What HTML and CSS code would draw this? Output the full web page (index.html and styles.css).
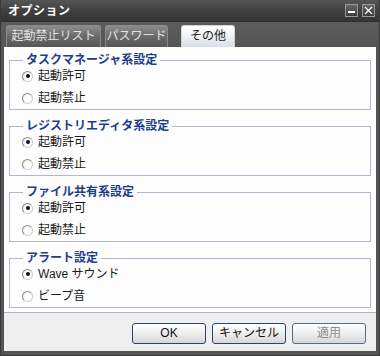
FILE: index.html
```html
<!DOCTYPE html>
<html lang="ja">
<head>
    <meta charset="UTF-8">
    <title>オプション</title>
    <link rel="stylesheet" href="styles.css">
</head>
<body>
<div class="window">
    <div class="titlebar">
        <span class="title">オプション</span>
        <div class="title-buttons">
            <span class="title-btn">
                <svg width="11" height="11" viewBox="0 0 11 11"><rect x="2" y="6" width="7" height="2" fill="#fff"/></svg>
            </span>
            <span class="title-btn">
                <svg width="11" height="11" viewBox="0 0 11 11"><path d="M2 2 L9 9 M9 2 L2 9" stroke="#fff" stroke-width="1.2"/></svg>
            </span>
        </div>
    </div>

    <div class="tabstrip">
        <div class="tab tab-list">起動禁止リスト</div>
        <div class="tab tab-password">パスワード</div>
        <div class="tab tab-other active">その他</div>
    </div>

    <div class="body">
        <div class="panel">
            <fieldset class="group">
                <legend>タスクマネージャ系設定</legend>
                <label class="row"><span class="radio checked"></span>起動許可</label>
                <label class="row"><span class="radio"></span>起動禁止</label>
            </fieldset>
            <fieldset class="group">
                <legend>レジストリエディタ系設定</legend>
                <label class="row"><span class="radio checked"></span>起動許可</label>
                <label class="row"><span class="radio"></span>起動禁止</label>
            </fieldset>
            <fieldset class="group">
                <legend>ファイル共有系設定</legend>
                <label class="row"><span class="radio checked"></span>起動許可</label>
                <label class="row"><span class="radio"></span>起動禁止</label>
            </fieldset>
            <fieldset class="group">
                <legend>アラート設定</legend>
                <label class="row"><span class="radio checked"></span>Wave サウンド</label>
                <label class="row"><span class="radio"></span>ビープ音</label>
            </fieldset>
        </div>

        <div class="footer">
            <button class="btn">OK</button>
            <button class="btn">キャンセル</button>
            <button class="btn disabled">適用</button>
        </div>
    </div>
</div>
</body>
</html>
```

FILE: styles.css
```css
/* ダイアログ全体 */
body {
    margin: 0;
    font-family: "Liberation Sans", "Noto Sans CJK JP", sans-serif;
    font-size: 12px;
    background-color: #4e4e4e;
}

.window {
    width: 380px;
    height: 356px;
    background-color: #545454;
    display: flex;
    flex-direction: column;
    box-sizing: border-box;
    border-left: 1px solid #3a3a3a;
    border-right: 1px solid #3a3a3a;
    border-bottom: 1px solid #3a3a3a;
}

/* タイトルバー */
.titlebar {
    height: 22px;
    display: flex;
    align-items: center;
    justify-content: space-between;
    padding: 0 4px 0 7px;
    background: linear-gradient(#555555, #3d3d3d 60%, #353535);
    border-bottom: 1px solid #2e2e2e;
    box-sizing: border-box;
}

.title {
    color: #ffffff;
    font-weight: bold;
    font-size: 12px;
    line-height: 14px;
    letter-spacing: 0.5px;
}

.title-buttons {
    display: flex;
    gap: 4px;
    margin-top: -1px;
}

.title-btn {
    width: 13px;
    height: 13px;
    box-sizing: border-box;
    border: 1px solid #9a9a9a;
    background: linear-gradient(#666666, #3a3a3a);
    display: flex;
    align-items: center;
    justify-content: center;
}

/* タブ */
.tabstrip {
    height: 25px;
    display: flex;
    align-items: flex-end;
    padding-left: 5px;
    gap: 4px;
    background: linear-gradient(#5c5c5c, #555555);
}

.tab {
    height: 22px;
    box-sizing: border-box;
    text-align: center;
    line-height: 20px;
    color: #e2e2e2;
    border: 1px solid #8a8a8a;
    border-bottom: none;
    border-radius: 3px 3px 0 0;
    background: linear-gradient(#8c8c8c, #6a6a6a 50%, #565656);
}

.tab-list {
    width: 95px;
}

.tab-password {
    width: 63px;
}

.tab-other {
    width: 54px;
    margin-left: 9px;
}

.tab.active {
    color: #1a1a1a;
    border-color: #d0d4da;
    background: linear-gradient(#ffffff, #eef1f5 50%, #d8dee6);
}

/* 本体 */
.body {
    flex: 1;
    margin: 0 3px 4px 3px;
    display: flex;
    flex-direction: column;
    background-color: #efefef;
}

.panel {
    height: 266px;
    box-sizing: border-box;
    background-color: #fdfdfd;
    border-bottom: 1px solid #b0b2c0;
    padding: 9px 5px 0 5px;
}

.group {
    margin: 0 0 12px 0;
    padding: 1px 0 0 0;
    border: 1px solid #b4b7cb;
    min-width: 0;
}

.group legend {
    margin-left: 13px;
    padding: 0 3px;
    font-weight: bold;
    line-height: 8px;
    color: #1d3d8d;
}

.row {
    height: 22px;
    display: flex;
    align-items: center;
    padding-left: 12px;
    color: #1a1a1a;
    line-height: 14px;
}

.radio {
    width: 11px;
    height: 11px;
    box-sizing: border-box;
    border-radius: 50%;
    border: 1px solid #8a8a8a;
    border-right-color: #c8c8c8;
    border-bottom-color: #d4d4d4;
    background: radial-gradient(circle at 60% 60%, #ffffff 40%, #e2e2e2);
    margin-right: 5px;
    display: flex;
    align-items: center;
    justify-content: center;
}

.radio.checked::after {
    content: "";
    width: 4px;
    height: 4px;
    border-radius: 50%;
    background-color: #111111;
}

/* ボタン */
.footer {
    flex: 1;
    display: flex;
    justify-content: flex-end;
    align-items: flex-start;
    gap: 6px;
    padding: 10px 10px 0 0;
}

.btn {
    width: 74px;
    height: 21px;
    padding: 0;
    font-family: "Liberation Sans", "Noto Sans CJK JP", sans-serif;
    font-size: 12px;
    line-height: 19px;
    color: #111111;
    border: 1px solid #26456a;
    border-radius: 3px;
    background: linear-gradient(#ffffff, #f0f0f0 45%, #d6d6d6);
}

.btn.disabled {
    color: #8c8c8c;
    border-color: #4f6c8c;
}
```
